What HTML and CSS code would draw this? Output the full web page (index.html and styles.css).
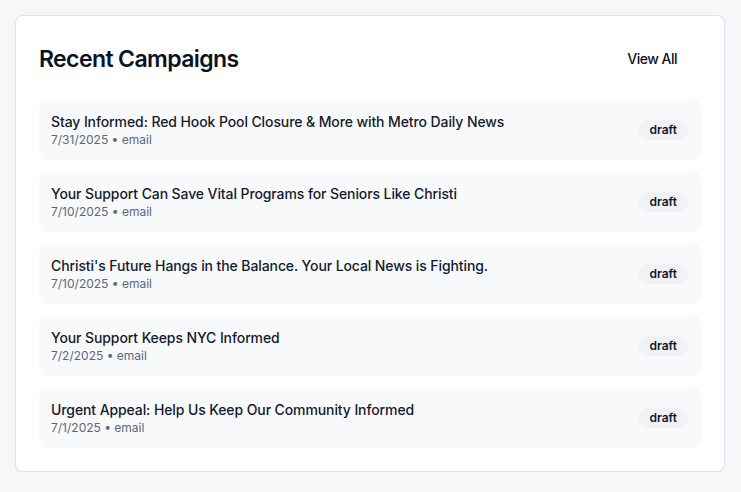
FILE: index.html
```html
<!DOCTYPE html>
<html>
<head>
<meta charset="utf-8">
<link rel="stylesheet" href="styles.css">
</head>
<body>
<div class="card">
  <div class="card-header">
    <h2 class="title">Recent Campaigns</h2>
    <button class="view-all">View All</button>
  </div>
  <div class="list">
    <div class="row">
      <div class="info">
        <div class="name">Stay Informed: Red Hook Pool Closure &amp; More with Metro Daily News</div>
        <div class="meta">7/31/2025 • email</div>
      </div>
      <span class="badge">draft</span>
    </div>
    <div class="row">
      <div class="info">
        <div class="name">Your Support Can Save Vital Programs for Seniors Like Christi</div>
        <div class="meta">7/10/2025 • email</div>
      </div>
      <span class="badge">draft</span>
    </div>
    <div class="row">
      <div class="info">
        <div class="name">Christi's Future Hangs in the Balance. Your Local News is Fighting.</div>
        <div class="meta">7/10/2025 • email</div>
      </div>
      <span class="badge">draft</span>
    </div>
    <div class="row">
      <div class="info">
        <div class="name">Your Support Keeps NYC Informed</div>
        <div class="meta">7/2/2025 • email</div>
      </div>
      <span class="badge">draft</span>
    </div>
    <div class="row">
      <div class="info">
        <div class="name">Urgent Appeal: Help Us Keep Our Community Informed</div>
        <div class="meta">7/1/2025 • email</div>
      </div>
      <span class="badge">draft</span>
    </div>
  </div>
</div>
</body>
</html>
```

FILE: styles.css
```css
* { box-sizing: border-box; }
html, body {
  margin: 0;
  padding: 0;
  background: #f6f7f9;
  font-family: Inter, "Noto Sans", sans-serif;
  color: #0f1729;
}
body { padding: 15px 16px 0 15px; }
.card {
  background: #ffffff;
  border: 1px solid #dfe3ea;
  border-radius: 8px;
  box-shadow: 0 1px 2px rgba(16, 24, 40, 0.05);
  padding: 23px;
  width: 710px;
}
.card-header {
  display: flex;
  align-items: center;
  justify-content: space-between;
  height: 39px;
  margin-bottom: 22px;
}
.title {
  margin: 0;
  font-size: 23px;
  line-height: 32px;
  font-weight: 600;
  letter-spacing: -0.6px;
  color: #0b1220;
}
.view-all {
  font-family: inherit;
  background: transparent;
  border: none;
  font-size: 14px;
  font-weight: 500;
  color: #0b1220;
  padding: 0 24px 0 16px;
  height: 36px;
  letter-spacing: -0.5px;
}
.list {
  display: flex;
  flex-direction: column;
  gap: 12px;
}
.row {
  display: flex;
  align-items: center;
  justify-content: space-between;
  background: #f8f9fb;
  border-radius: 8px;
  padding: 12px 13px 12px 12px;
  height: 60px;
}
.name {
  font-size: 14px;
  line-height: 20px;
  font-weight: 500;
  letter-spacing: -0.1px;
  color: #151b2b;
}
.meta {
  font-size: 12px;
  line-height: 16px;
  color: #5a687e;
}
.badge {
  display: inline-block;
  background: #f0f2f5;
  border-radius: 999px;
  font-size: 12px;
  font-weight: 600;
  line-height: 20px;
  padding: 0 11px 0 12px;
  color: #0f1729;
}
```
